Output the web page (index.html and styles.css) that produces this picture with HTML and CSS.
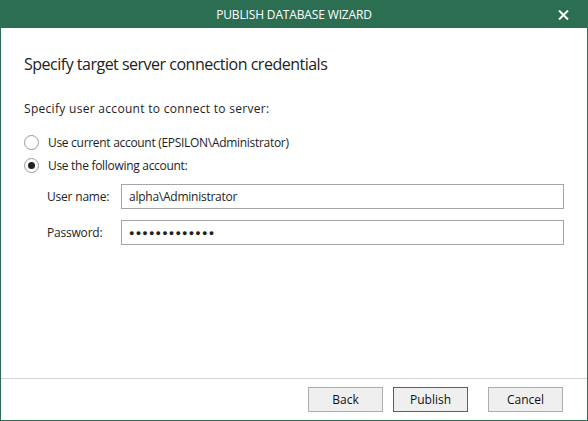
FILE: index.html
```html
<!DOCTYPE html>
<html lang="en">
<head>
  <meta charset="UTF-8" />
  <title>Publish Database Wizard</title>
  <link rel="stylesheet" href="styles.css">
</head>
<body>

  <div class="window">
    <div class="titlebar">
      <span class="title">PUBLISH DATABASE WIZARD</span>
      <svg class="close" width="11" height="10" viewBox="0 0 11 10">
        <path d="M1 0.5 L10 9.5 M10 0.5 L1 9.5" stroke="#fff" stroke-width="2" fill="none"/>
      </svg>
    </div>

    <div class="content">
      <h1>Specify target server connection credentials</h1>
      <p class="caption">Specify user account to connect to server:</p>

      <label class="radio-row">
        <span class="radio"></span>
        Use current account (EPSILON\Administrator)
      </label>
      <label class="radio-row">
        <span class="radio checked"></span>
        Use the following account:
      </label>

      <div class="fields">
        <div class="field">
          <span class="field-label">User name:</span>
          <div class="input">alpha\Administrator</div>
        </div>
        <div class="field">
          <span class="field-label">Password:</span>
          <div class="input dots">&#9679;&#9679;&#9679;&#9679;&#9679;&#9679;&#9679;&#9679;&#9679;&#9679;&#9679;&#9679;&#9679;</div>
        </div>
      </div>
    </div>

    <div class="footer">
      <button class="btn">Back</button>
      <button class="btn default">Publish</button>
      <button class="btn cancel">Cancel</button>
    </div>
  </div>

</body>
</html>
```

FILE: styles.css
```css
body {
  margin: 0;
  padding: 0;
  font-family: "Segoe UI", "Open Sans", sans-serif;
  font-size: 12px;
  color: #1e1e1e;
  background: #fff;
}
.window {
  width: 588px;
  height: 421px;
  box-sizing: border-box;
  border: 1px solid #2b6e52;
  border-top: none;
  display: flex;
  flex-direction: column;
}
.titlebar {
  height: 28px;
  margin: 0 -1px;
  background: #2b6e52;
  color: #fff;
  display: flex;
  align-items: center;
  justify-content: center;
  position: relative;
}
.title {
  font-size: 12px;
  letter-spacing: -0.15px;
}
.close {
  position: absolute;
  right: 19px;
  top: 10px;
}
.content {
  flex: 1;
  padding: 0 23px;
}
h1 {
  font-size: 16px;
  font-weight: normal;
  margin: 26px 0 0;
  line-height: 20px;
  letter-spacing: -0.5px;
  color: #222;
}
.caption {
  margin: 27px 0 14px;
  line-height: 16px;
  letter-spacing: 0.3px;
}
.radio-row {
  display: flex;
  align-items: center;
  gap: 9px;
  height: 23px;
  letter-spacing: -0.3px;
}
.radio {
  width: 13px;
  height: 13px;
  border: 1px solid #999;
  border-radius: 50%;
  box-sizing: content-box;
  display: flex;
  align-items: center;
  justify-content: center;
}
.radio.checked::after {
  content: "";
  width: 7px;
  height: 7px;
  border-radius: 50%;
  background: #222;
}
.fields {
  padding-left: 23px;
  margin-top: 7px;
  display: flex;
  flex-direction: column;
  gap: 11px;
}
.field {
  display: flex;
  align-items: center;
}
.field-label {
  width: 74px;
  letter-spacing: -0.2px;
}
.input {
  flex: 1;
  height: 25px;
  box-sizing: border-box;
  border: 1px solid #a5a5a5;
  padding: 0 7px;
  display: flex;
  align-items: center;
  letter-spacing: -0.25px;
}
.input.dots {
  font-size: 9px;
  letter-spacing: 1.2px;
}
.footer {
  border-top: 1px solid #d4d4d4;
  padding: 8px 24px 8px 0;
  display: flex;
  justify-content: flex-end;
  gap: 10px;
}
.btn {
  width: 75px;
  height: 25px;
  font-family: inherit;
  font-size: 12px;
  background: #efefef;
  border: 1px solid #adadad;
  color: #111;
  padding: 0;
}
.btn.default {
  border-color: #1f6fb4;
}
.btn.cancel {
  margin-left: 10px;
}
```
